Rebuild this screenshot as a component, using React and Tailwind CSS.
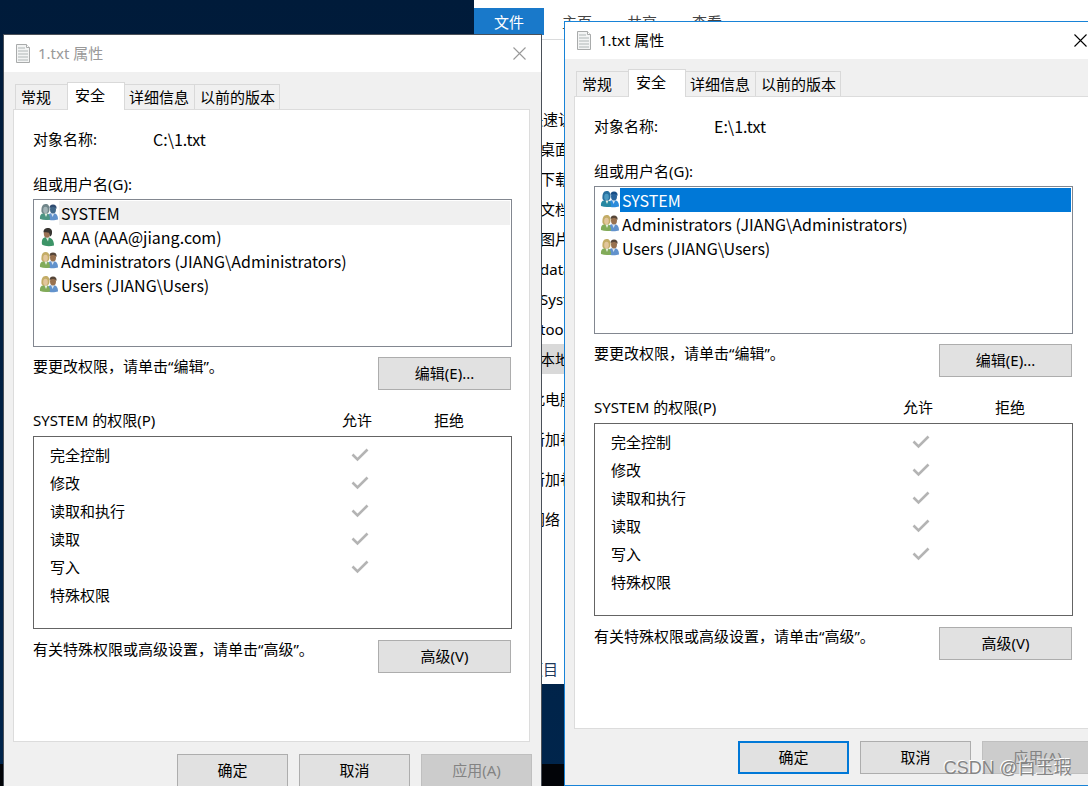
import React, { useState } from 'react';
import clsx from 'clsx';

const TABS = ['常规', '安全', '详细信息', '以前的版本'];

const PERMISSIONS = [
  { name: '完全控制', allow: true },
  { name: '修改', allow: true },
  { name: '读取和执行', allow: true },
  { name: '读取', allow: true },
  { name: '写入', allow: true },
  { name: '特殊权限', allow: false },
];

const C_USERS = [
  { name: 'SYSTEM', icon: 'system' },
  { name: 'AAA (AAA@jiang.com)', icon: 'user' },
  { name: 'Administrators (JIANG\\Administrators)', icon: 'group' },
  { name: 'Users (JIANG\\Users)', icon: 'group' },
];

const E_USERS = [
  { name: 'SYSTEM', icon: 'system' },
  { name: 'Administrators (JIANG\\Administrators)', icon: 'group' },
  { name: 'Users (JIANG\\Users)', icon: 'group' },
];

// Quick access entries of the explorer window behind the dialogs
const NAV_ITEMS = ['快速访问', '桌面', '下载', '文档', '图片', 'data', 'System32', 'tools', '本地磁盘'];
const NAV_ROOTS = ['此电脑', '新加卷', '新加卷', '网络'];

function FileIcon() {
  return (
    <svg width="17" height="20" viewBox="0 0 17 20" aria-hidden="true">
      <path d="M1.500.5h10l3 3v15h-13z" fill="#f3f4f4" stroke="#a9abab" />
      <path d="M11.500.5v3h3" fill="#fff" stroke="#a9abab" />
      <path d="M3 4h7M3 7h10M3 10h10M3 13h10M3 16h10" stroke="#c6caca" strokeWidth="1.6" />
    </svg>
  );
}

function CloseIcon() {
  return (
    <svg width="13" height="13" viewBox="0 0 13 13" aria-hidden="true">
      <path d="M.5 .5l12 12M12.5 .5l-12 12" stroke="currentColor" strokeWidth="1.1" />
    </svg>
  );
}

function CheckIcon() {
  return (
    <svg width="18" height="14" viewBox="0 0 18 14" role="img" aria-label="允许">
      <path d="M1.500 6.500l5 5L16.500 1.500" fill="none" stroke="#b4b4b4" strokeWidth="2.600" />
    </svg>
  );
}

function PrincipalIcon({ type, selected }) {
  if (type === 'user') {
    return (
      <svg width="20" height="20" viewBox="0 0 20 20" aria-hidden="true">
        <path d="M3 17.500c-.8-5 1-7 4-7.500 5 .2 8 2.500 8 8.500-4 1-9 1-12-1z" fill="#3c9467" />
        <path d="M6.500 10l2.500 4.500 1-4.500z" fill="#dcebe2" />
        <ellipse cx="8" cy="6.500" rx="3.200" ry="4.200" fill="#9b7255" />
        <path d="M4.500 5.500c0-3.500 2-4.500 4.500-4.500s4.500 1.500 4 5c0 2-1 3-2 3.500 0-2-.5-3-1.500-4-2 .2-4-.5-5 0z" fill="#383531" />
      </svg>
    );
  }
  const system = type === 'system';
  const hair = selected ? '#286f9e' : system ? '#71868a' : '#c3ac66';
  const face = selected ? '#4c9ac2' : system ? '#a3b4b7' : '#e2c69c';
  const leftBody = selected ? '#2788a2' : system ? '#4d9483' : '#82ab59';
  const rightHead = selected ? '#29649c' : system ? '#426889' : '#98714f';
  const rightHair = selected ? '#184e86' : system ? '#314d72' : '#574638';
  return (
    <svg width="20" height="20" viewBox="0 0 20 20" aria-hidden="true">
      <path d="M8 16c0-4 2-6 5.500-6S19 12 19 16.500c-3 1-8 1-11 0z" fill={selected ? '#2c8bdb' : '#6292cc'} />
      <path d="M12 10l1.500 4 2-4z" fill="#d7e4f2" />
      <ellipse cx="14" cy="6.500" rx="3" ry="4" fill={rightHead} />
      <path d="M10.500 5.500c0-3 1-4 3.500-4s4 1.500 3.500 4.500c-1-1.500-2-2-4-2-1.500.2-2 .5-3 1.500z" fill={rightHair} />
      <path d="M1 16c-.5-4 1.500-6 5-6s5 2 5 6.500c-3 1-7 .7-10-.5z" fill={leftBody} />
      <path d="M2.500 9c-.5-5 1-8 4-8s4 2 4 5.500c0 2-1 4-3 4.500-2 .2-4-.5-5-2z" fill={hair} />
      <ellipse cx="6.500" cy="7" rx="2.300" ry="3.300" fill={face} />
      <path d="M5.500 10.500l1.500 3.500 1.500-3.500z" fill="#e5eee0" />
    </svg>
  );
}

function DialogButton({ children, primary, disabled, className }) {
  return (
    <button
      type="button"
      disabled={disabled}
      className={clsx(
        'h-[33px] shrink-0 pb-[2px]',
        primary ? 'border-2 border-[#0078d7]' : 'border',
        !primary && (disabled ? 'border-[#bfbfbf]' : 'border-[#adadad]'),
        disabled ? 'bg-[#cccccc] text-[#838383]' : 'bg-[#e1e1e1]',
        className
      )}
    >
      {children}
    </button>
  );
}

function PropertiesDialog({ id, path, users, active, className }) {
  const [selected, setSelected] = useState(0);

  return (
    <section
      aria-label="1.txt 属性"
      className={clsx('absolute w-[539px] border bg-[#f0f0f0]', active ? 'border-[#1883d7]' : 'border-[#4a5058]', className)}
    >
      {/* Title bar */}
      <header className={clsx('flex h-[37px] items-center bg-white pr-[15px] pl-[11px]', !active && 'text-[#999999]')}>
        <FileIcon />
        <h2 className="ml-[6px] flex-1 pb-[2px]">1.txt 属性</h2>
        <button type="button" aria-label="关闭">
          <CloseIcon />
        </button>
      </header>

      {/* Tabs */}
      <div className="pt-[10px] pr-[11px] pl-[9px]">
        <div role="tablist" className="flex items-end pl-[2px]">
          {TABS.map((tab) => (
            <button
              key={tab}
              type="button"
              role="tab"
              aria-selected={tab === '安全'}
              className={clsx(
                'border-t border-r border-[#d9d9d9] text-left whitespace-nowrap first:border-l',
                tab === '安全' ? 'relative -mb-px h-7 w-[58px] bg-white pb-1 pl-2' : 'h-[25px]',
                tab === '常规' && 'w-[53px] pl-[5px]',
                tab === '安全' && '-ml-px border-l pl-[7px]',
                tab === '详细信息' && 'w-[70px] pl-1',
                tab === '以前的版本' && 'w-[85px] pl-[5px]'
              )}
            >
              {tab}
            </button>
          ))}
        </div>

        <div role="tabpanel" className="border border-[#dcdcdc] bg-white pt-[19px] pr-[17px] pb-[68px] pl-[19px]">
          <div className="flex h-5 items-center">
            <span className="w-[120px]">对象名称:</span>
            <span className="font-['Noto_Sans_CJK_SC',sans-serif] text-[16px]">{path}</span>
          </div>

          <h3 className="mt-[25px] h-5 leading-5">组或用户名(G):</h3>
          <ul role="listbox" aria-label="组或用户名" className="mt-[5px] h-[148px] border border-[#828790] p-px">
            {users.map((user, i) => (
              <li
                key={user.name}
                role="option"
                aria-selected={i === selected}
                onClick={() => setSelected(i)}
                className="flex h-6 items-center pl-1"
              >
                <PrincipalIcon type={user.icon} selected={active && i === selected} />
                <span
                  className={clsx(
                    "flex-1 pl-[2px] font-['Noto_Sans_CJK_SC',sans-serif] text-[16px] leading-6",
                    i === selected && (active ? 'bg-[#0078d7] text-white' : 'bg-[#f0f0f0]')
                  )}
                >
                  {user.name}
                </span>
              </li>
            ))}
          </ul>

          <div className="mt-[10px] flex justify-between pr-px">
            <p className="leading-[18px]">要更改权限，请单击“编辑”。</p>
            <DialogButton className="w-[133px]">编辑(E)...</DialogButton>
          </div>

          <div className="mt-5 flex h-5 items-center" id={`${id}-perm`}>
            <span className="flex-1">{users[selected].name.split(' ')[0]} 的权限(P)</span>
            <span className="w-[92px]">允许</span>
            <span className="w-[78px]">拒绝</span>
          </div>
          <div className="mt-[6px] h-[193px] border border-[#646464] py-[4px] pl-4">
            <table aria-labelledby={`${id}-perm`} className="w-full table-fixed">
              <tbody>
                {PERMISSIONS.map((perm) => (
                  <tr key={perm.name} className="h-7">
                    <td className="p-0">{perm.name}</td>
                    <td className="w-[160px] p-0">{perm.allow && <CheckIcon />}</td>
                  </tr>
                ))}
              </tbody>
            </table>
          </div>

          <div className="mt-[11px] flex justify-between pr-px">
            <p className="leading-[18px]">有关特殊权限或高级设置，请单击“高级”。</p>
            <DialogButton className="w-[133px]">高级(V)</DialogButton>
          </div>
        </div>
      </div>

      <footer className="flex justify-end gap-[11px] pt-3 pr-[9px] pb-[11px]">
        <DialogButton primary={active} className="w-[111px]">确定</DialogButton>
        <DialogButton className="w-[111px]">取消</DialogButton>
        <DialogButton disabled className="w-[111px]">应用(A)</DialogButton>
      </footer>
    </section>
  );
}

function ExplorerWindow() {
  return (
    <section aria-label="文件资源管理器" className="absolute top-0 right-0 left-[474px] h-[684px] bg-white">
      <nav className="flex h-10 items-end border-b border-[#dadbdc] pb-1">
        <button type="button" className="h-[27px] w-[70px] bg-[#1979ca] text-white">文件</button>
        <button type="button" className="ml-[18px] h-[27px] text-[#444444]">主页</button>
        <button type="button" className="ml-[35px] h-[27px] text-[#444444]">共享</button>
        <button type="button" className="ml-[35px] h-[27px] text-[#444444]">查看</button>
      </nav>
      <ul className="mt-16">
        {NAV_ITEMS.map((item, i) => (
          <li
            key={item}
            className={clsx('h-[30px] leading-[30px]', i === 0 ? 'pl-[54px]' : 'pl-[66px]', i === 8 && 'w-[200px] bg-[#d9d9d9]')}
          >
            {item}
          </li>
        ))}
      </ul>
      <ul className="mt-[5px]">
        {NAV_ROOTS.map((item, i) => (
          <li key={i} className="h-10 pl-[56px] leading-10">{item}</li>
        ))}
      </ul>
      <p className="mt-[120px] pl-[54px] text-[#1e395b]">项目</p>
    </section>
  );
}

export default function App() {
  return (
    <main className="relative h-screen overflow-hidden bg-linear-to-b from-[#001b3a] to-[#00254c] font-['Noto_Sans','Noto_Sans_CJK_SC',sans-serif] text-[15px] leading-5 text-black">
      <div className="absolute inset-x-0 bottom-0 h-[22px] bg-[#020408]" />
      <ExplorerWindow />
      <PropertiesDialog id="c" path="C:\1.txt" users={C_USERS} className="top-[34px] left-[3px]" />
      <PropertiesDialog id="e" path="E:\1.txt" users={E_USERS} active className="top-[21px] left-[564px]" />
      <p className="absolute right-4 bottom-[6px] font-['Liberation_Sans','Noto_Sans_CJK_SC',sans-serif] text-[18px] leading-6 text-[#858585] [text-shadow:-1px_-1px_0_#fff]">
        CSDN @白玉瑕
      </p>
    </main>
  );
}
